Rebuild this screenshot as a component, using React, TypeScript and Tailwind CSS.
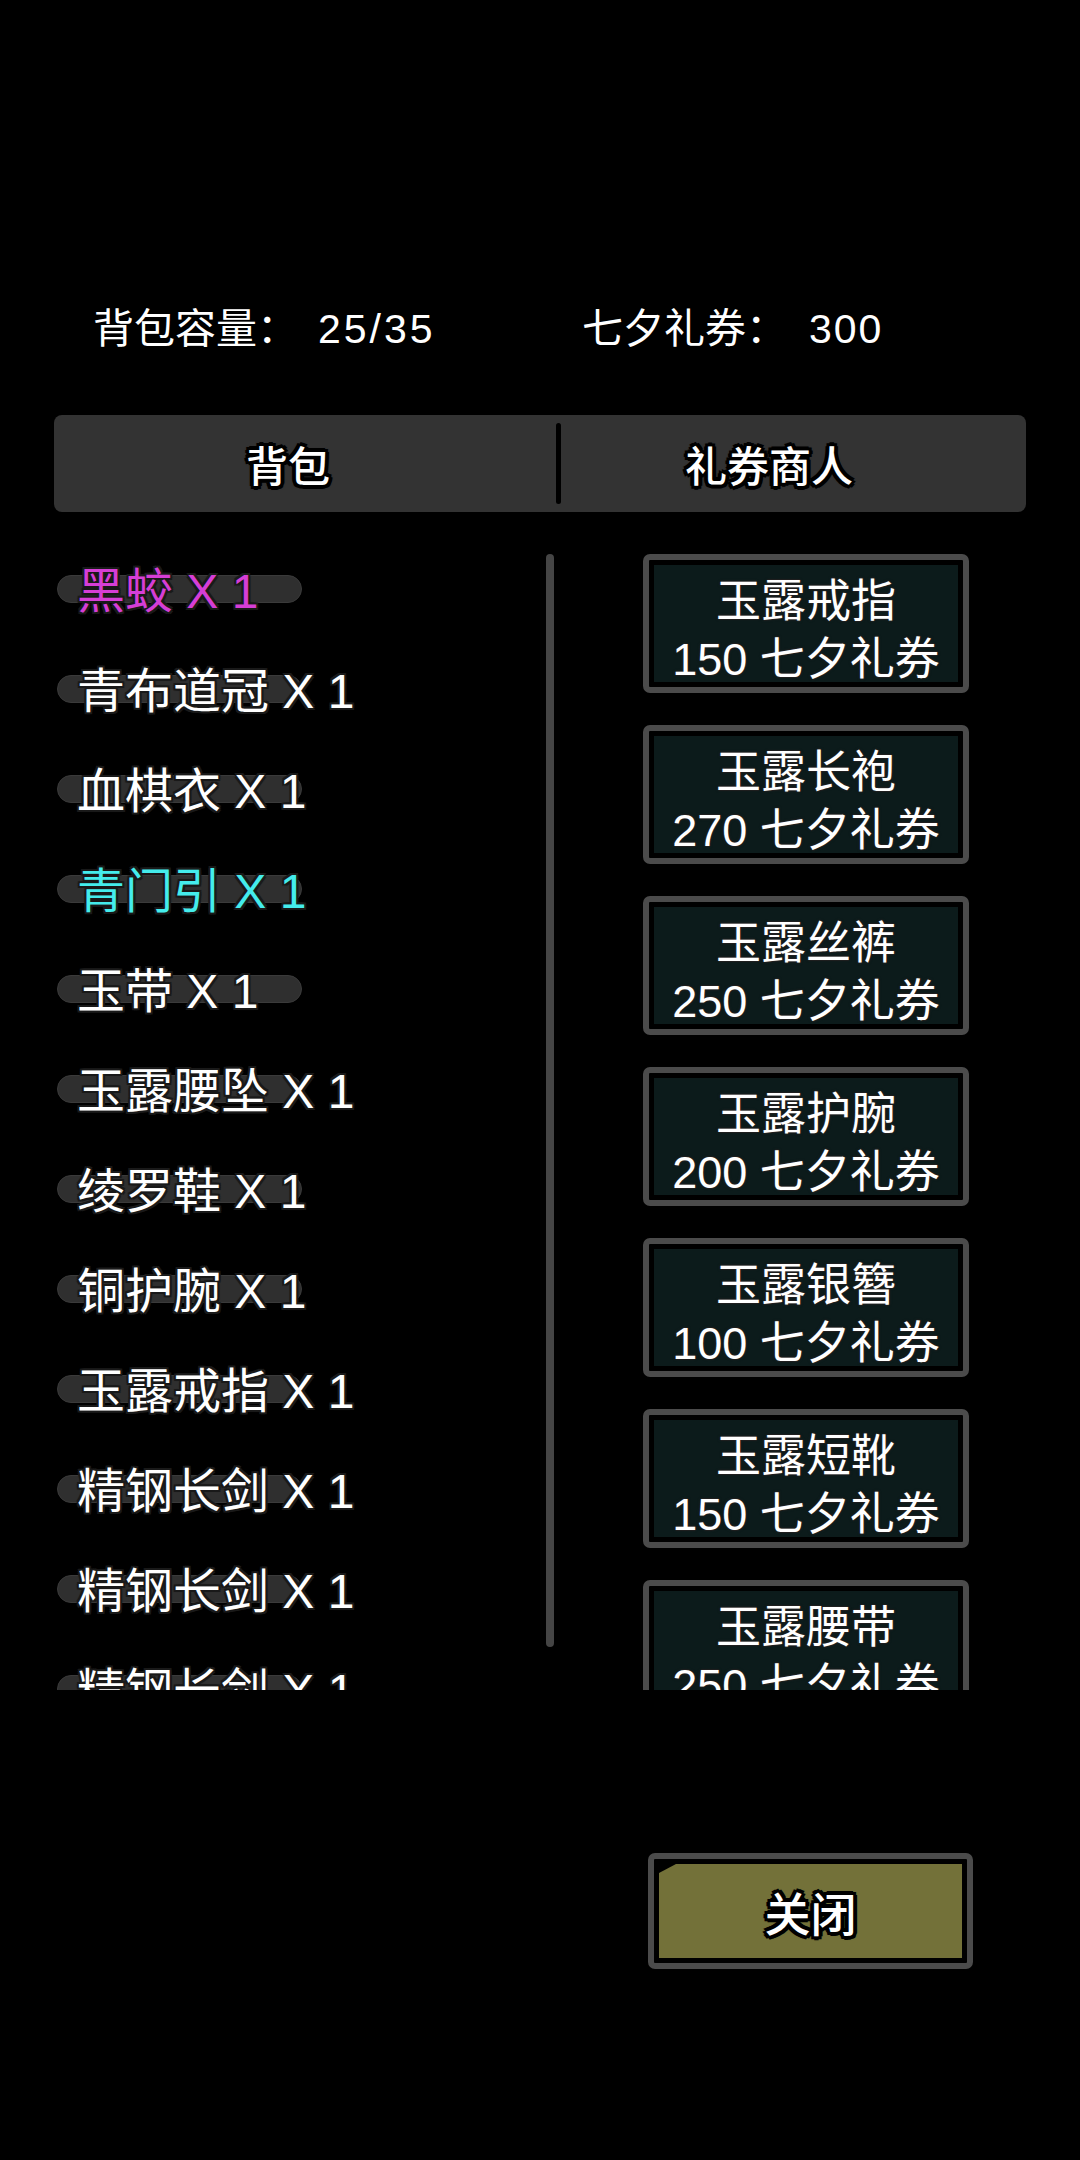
import React from "react";

const bagItems = [
  { name: "黑蛟", color: "text-[#d63ed6]" },
  { name: "青布道冠", color: "text-white" },
  { name: "血棋衣", color: "text-white" },
  { name: "青门引", color: "text-[#44ecec]" },
  { name: "玉带", color: "text-white" },
  { name: "玉露腰坠", color: "text-white" },
  { name: "绫罗鞋", color: "text-white" },
  { name: "铜护腕", color: "text-white" },
  { name: "玉露戒指", color: "text-white" },
  { name: "精钢长剑", color: "text-white" },
  { name: "精钢长剑", color: "text-white" },
  { name: "精钢长剑", color: "text-white" },
];

const shopItems = [
  { name: "玉露戒指", price: 150 },
  { name: "玉露长袍", price: 270 },
  { name: "玉露丝裤", price: 250 },
  { name: "玉露护腕", price: 200 },
  { name: "玉露银簪", price: 100 },
  { name: "玉露短靴", price: 150 },
  { name: "玉露腰带", price: 250 },
];

// outlines painted with stacked shadows
const thinOutline =
  "[text-shadow:0_0_3px_#1a1a1a,2px_0_0_#1a1a1a,-2px_0_0_#1a1a1a,0_2px_0_#1a1a1a,0_-2px_0_#1a1a1a,2px_2px_0_#1a1a1a,-2px_-2px_0_#1a1a1a,2px_-2px_0_#1a1a1a,-2px_2px_0_#1a1a1a]";
const cardOutline =
  "[text-shadow:1px_0_0_#1e1e1e,-1px_0_0_#1e1e1e,0_1px_0_#1e1e1e,0_-1px_0_#1e1e1e,0_0_3px_#222]";
const heavyOutline =
  "[text-shadow:0_0_4px_#000,4px_0_0_#000,-4px_0_0_#000,0_4px_0_#000,0_-4px_0_#000,3px_3px_0_#000,-3px_-3px_0_#000,3px_-3px_0_#000,-3px_3px_0_#000]";

function BagRow({ name, color }: { name: string; color: string }) {
  return (
    <div className="relative h-[100px] shrink-0">
      <div className="absolute left-[57px] top-[35px] w-[245px] h-[28px] rounded-full bg-[#2f2f2f] border border-[#3a3a3a]" />
      <div
        className={`relative pl-[77px] pt-[4px] text-[48px] leading-[96px] whitespace-nowrap ${color} ${thinOutline}`}
      >
        {name} X 1
      </div>
    </div>
  );
}

function ShopCard({ name, price }: { name: string; price: number }) {
  return (
    <div className="w-[326px] h-[139px] shrink-0 rounded-[7px] border-[6px] border-[#4b4b4b] bg-black p-[5px]">
      <div
        className={`h-full bg-[#0c1b1b] flex flex-col items-center pt-[8px] text-white text-[45px] leading-[58px] whitespace-nowrap ${cardOutline}`}
      >
        <span>{name}</span>
        <span>{price} 七夕礼券</span>
      </div>
    </div>
  );
}

export default function App() {
  return (
    <div className="w-[1080px] h-[2160px] bg-black overflow-hidden font-['Liberation_Sans','Noto_Sans_CJK_SC',sans-serif] text-white">
      {/* header stats */}
      <div className="flex pt-[305px] pl-[93px] text-[41px] leading-[48px] whitespace-nowrap">
        <div className="w-[489px] flex">
          <span>背包容量：</span>
          <span className="ml-[20px] tracking-[3px]">25/35</span>
        </div>
        <div className="flex">
          <span>七夕礼券：</span>
          <span className="ml-[22px] tracking-[2px]">300</span>
        </div>
      </div>

      {/* tabs */}
      <div className="mt-[62px] mx-[54px] h-[97px] rounded-[8px] bg-[#333333] flex items-center">
        <div className={`w-[468px] pt-[8px] text-center text-[42px] font-medium ${heavyOutline}`}>背包</div>
        <div className="ml-[34px] w-[5px] h-[81px] rounded-full bg-black" />
        <div className={`w-[416px] pt-[8px] text-center text-[42px] font-medium ${heavyOutline}`}>礼券商人</div>
      </div>

      {/* content */}
      <div className="mt-[28px] h-[1150px] overflow-hidden flex">
        <div className="w-[546px] flex flex-col">
          {bagItems.map((it, i) => (
            <BagRow key={i} name={it.name} color={it.color} />
          ))}
        </div>
        <div className="mt-[14px] w-[8px] h-[1093px] rounded-full bg-[#454545]" />
        <div className="ml-[89px] mt-[14px] flex flex-col gap-[32px]">
          {shopItems.map((it, i) => (
            <ShopCard key={i} name={it.name} price={it.price} />
          ))}
        </div>
      </div>

      {/* close */}
      <div className="mt-[163px] ml-[648px] w-[325px] h-[116px] rounded-[7px] border-[6px] border-[#4b4b4b] bg-black p-[5px]">
        <div className="h-full bg-[#737139] [clip-path:polygon(17px_0,100%_0,100%_100%,0_100%,0_9px)] flex items-center justify-center">
          <span className={`pt-[8px] text-[46px] font-medium leading-none ${heavyOutline}`}>关闭</span>
        </div>
      </div>
    </div>
  );
}
